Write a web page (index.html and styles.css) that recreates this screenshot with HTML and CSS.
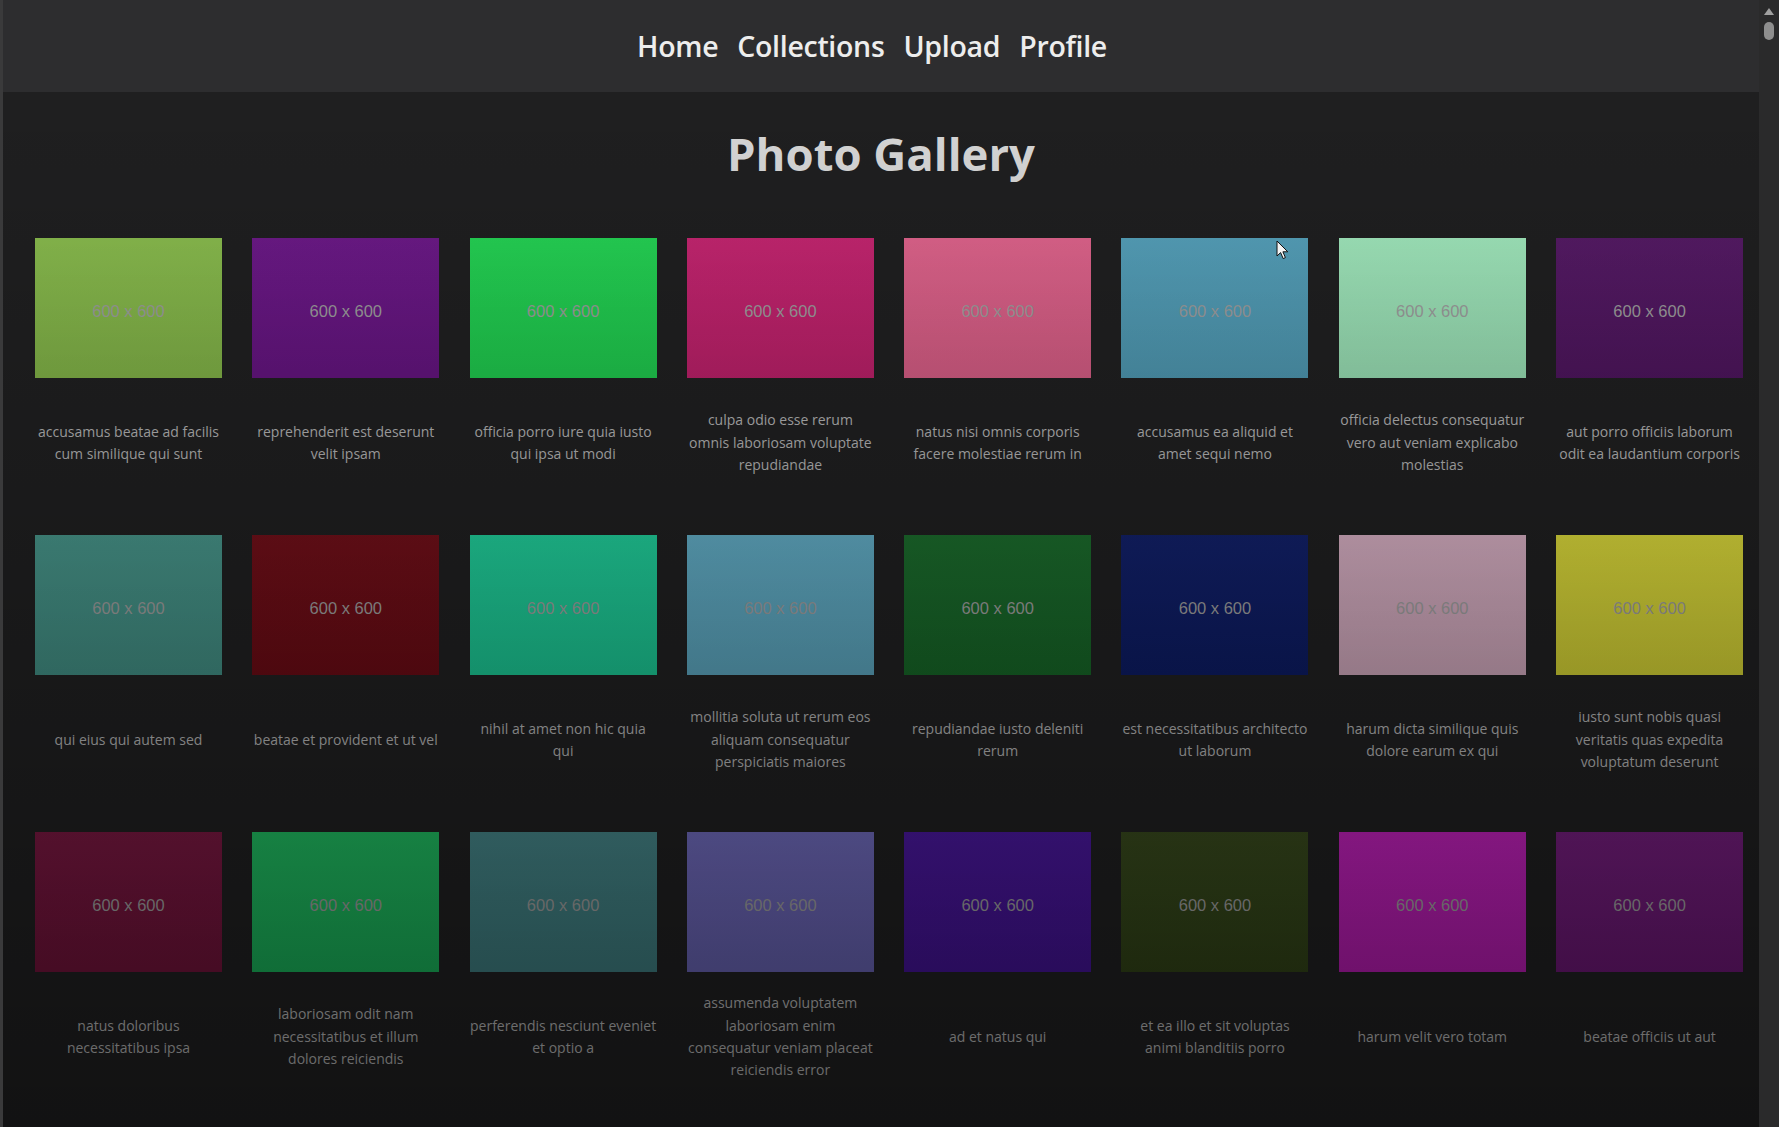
FILE: index.html
```html
<!DOCTYPE html>
<html lang="en">
<head>
<meta charset="utf-8">
<title>Photo Gallery</title>
<link rel="stylesheet" href="styles.css">
</head>
<body>
<div class="window">
  <div class="edge"></div>
  <div class="page">
    <nav class="nav">
      <a class="nav-link" href="#">Home</a>
      <a class="nav-link" href="#">Collections</a>
      <a class="nav-link" href="#">Upload</a>
      <a class="nav-link" href="#">Profile</a>
    </nav>
    <main class="main">
      <h1 class="title">Photo Gallery</h1>
      <div class="grid">
        <div class="card"><div class="thumb" style="background-color:#86b94a"><span>600 x 600</span></div><p class="caption">accusamus beatae ad facilis cum similique qui sunt</p></div>
        <div class="card"><div class="thumb" style="background-color:#681584"><span>600 x 600</span></div><p class="caption">reprehenderit est deserunt velit ipsam</p></div>
        <div class="card"><div class="thumb" style="background-color:#20d050"><span>600 x 600</span></div><p class="caption">officia porro iure quia iusto qui ipsa ut modi</p></div>
        <div class="card"><div class="thumb" style="background-color:#c2216d"><span>600 x 600</span></div><p class="caption">culpa odio esse rerum omnis laboriosam voluptate repudiandae</p></div>
        <div class="card"><div class="thumb" style="background-color:#dd6089"><span>600 x 600</span></div><p class="caption">natus nisi omnis corporis facere molestiae rerum in</p></div>
        <div class="card"><div class="thumb" style="background-color:#519db7"><span>600 x 600</span></div><p class="caption">accusamus ea aliquid et amet sequi nemo</p></div>
        <div class="card"><div class="thumb" style="background-color:#9de5b9"><span>600 x 600</span></div><p class="caption">officia delectus consequatur vero aut veniam explicabo molestias</p></div>
        <div class="card"><div class="thumb" style="background-color:#511661"><span>600 x 600</span></div><p class="caption">aut porro officiis laborum odit ea laudantium corporis</p></div>

        <div class="card"><div class="thumb" style="background-color:#439186"><span>600 x 600</span></div><p class="caption">qui eius qui autem sed</p></div>
        <div class="card"><div class="thumb" style="background-color:#6c0b14"><span>600 x 600</span></div><p class="caption">beatae et provident et ut vel</p></div>
        <div class="card"><div class="thumb" style="background-color:#1cca96"><span>600 x 600</span></div><p class="caption">nihil at amet non hic quia qui</p></div>
        <div class="card"><div class="thumb" style="background-color:#5da8c1"><span>600 x 600</span></div><p class="caption">mollitia soluta ut rerum eos aliquam consequatur perspiciatis maiores</p></div>
        <div class="card"><div class="thumb" style="background-color:#176728"><span>600 x 600</span></div><p class="caption">repudiandae iusto deleniti rerum</p></div>
        <div class="card"><div class="thumb" style="background-color:#0d1c65"><span>600 x 600</span></div><p class="caption">est necessitatibus architecto ut laborum</p></div>
        <div class="card"><div class="thumb" style="background-color:#d2aabe"><span>600 x 600</span></div><p class="caption">harum dicta similique quis dolore earum ex qui</p></div>
        <div class="card"><div class="thumb" style="background-color:#d6d436"><span>600 x 600</span></div><p class="caption">iusto sunt nobis quasi veritatis quas expedita voluptatum deserunt</p></div>

        <div class="card"><div class="thumb" style="background-color:#74133c"><span>600 x 600</span></div><p class="caption">natus doloribus necessitatibus ipsa</p></div>
        <div class="card"><div class="thumb" style="background-color:#1bb65c"><span>600 x 600</span></div><p class="caption">laboriosam odit nam necessitatibus et illum dolores reiciendis</p></div>
        <div class="card"><div class="thumb" style="background-color:#408083"><span>600 x 600</span></div><p class="caption">perferendis nesciunt eveniet et optio a</p></div>
        <div class="card"><div class="thumb" style="background-color:#6a65b6"><span>600 x 600</span></div><p class="caption">assumenda voluptatem laboriosam enim consequatur veniam placeat reiciendis error</p></div>
        <div class="card"><div class="thumb" style="background-color:#451398"><span>600 x 600</span></div><p class="caption">ad et natus qui</p></div>
        <div class="card"><div class="thumb" style="background-color:#334518"><span>600 x 600</span></div><p class="caption">et ea illo et sit voluptas animi blanditiis porro</p></div>
        <div class="card"><div class="thumb" style="background-color:#ba1cb4"><span>600 x 600</span></div><p class="caption">harum velit vero totam</p></div>
        <div class="card"><div class="thumb" style="background-color:#6e1877"><span>600 x 600</span></div><p class="caption">beatae officiis ut aut</p></div>
      </div>
      <svg class="cursor" width="13" height="20" viewBox="0 0 13 20" aria-hidden="true">
        <path d="M1 1 L1 16 L4.6 12.6 L7.2 18.6 L9.4 17.6 L6.9 11.8 L11.8 11.8 Z" fill="#f4f4f4" stroke="#111" stroke-width="1" stroke-linejoin="round"/>
      </svg>
    </main>
  </div>
  <div class="scrollbar">
    <div class="scroll-arrow"></div>
    <div class="scroll-thumb"></div>
  </div>
</div>
</body>
</html>
```

FILE: styles.css
```css
* {
  box-sizing: border-box;
}

html, body {
  margin: 0;
  padding: 0;
  background: #1b1b1c;
}

body {
  font-family: "Open Sans", "Noto Sans", "DejaVu Sans", sans-serif;
}

.window {
  display: flex;
  width: 1779px;
  height: 1127px;
  overflow: hidden;
}

.edge {
  width: 3px;
  flex: none;
  background: #3a3a3b;
}

.page {
  flex: 1;
  display: flex;
  flex-direction: column;
  min-width: 0;
}

.nav {
  height: 92px;
  flex: none;
  background: #2d2d2f;
  display: flex;
  justify-content: center;
  align-items: center;
  gap: 19px;
  padding: 0 18px 0 0;
}

.nav-link {
  color: #ededed;
  text-decoration: none;
  font-size: 28.5px;
  font-weight: 600;
  line-height: 1;
  letter-spacing: -0.3px;
}

.main {
  flex: 1;
  position: relative;
  background: #1f1f20;
  padding: 0 0 0 32px;
}

.main::after {
  content: "";
  position: absolute;
  inset: 0;
  pointer-events: none;
  background: linear-gradient(to bottom, rgba(0, 0, 0, 0) 0%, rgba(0, 0, 0, 0.42) 100%);
}

.title {
  margin: 33px 0 0 -32px;
  height: 56px;
  line-height: 56px;
  text-align: center;
  color: #d6d6d6;
  font-size: 45.5px;
  font-weight: 700;
}

.grid {
  margin-top: 57px;
  display: grid;
  grid-template-columns: repeat(8, 187px);
  column-gap: 30.3px;
  row-gap: 27px;
}

.card {
  display: flex;
  flex-direction: column;
}

.thumb {
  height: 140px;
  display: flex;
  align-items: center;
  justify-content: center;
  background-image: linear-gradient(to bottom, rgba(255, 255, 255, 0.02), rgba(0, 0, 0, 0.07));
}

.thumb span {
  font-family: "Liberation Sans", Arial, sans-serif;
  font-size: 16.5px;
  color: #9a9a9a;
  margin-top: 6px;
}

.caption {
  margin: 0;
  height: 130px;
  display: flex;
  align-items: center;
  justify-content: center;
  text-align: center;
  color: #b0b0b0;
  font-size: 14px;
  line-height: 22.4px;
}

.cursor {
  position: absolute;
  left: 1273px;
  top: 148px;
  z-index: 2;
}

.scrollbar {
  width: 20px;
  flex: none;
  background: #2a2a2b;
  display: flex;
  flex-direction: column;
  align-items: center;
  padding-top: 8px;
  gap: 7px;
}

.scroll-arrow {
  width: 0;
  height: 0;
  border-left: 5px solid transparent;
  border-right: 5px solid transparent;
  border-bottom: 7px solid #a0a0a0;
}

.scroll-thumb {
  width: 10px;
  height: 18px;
  border-radius: 5px;
  background: #8e8e8e;
}
```
